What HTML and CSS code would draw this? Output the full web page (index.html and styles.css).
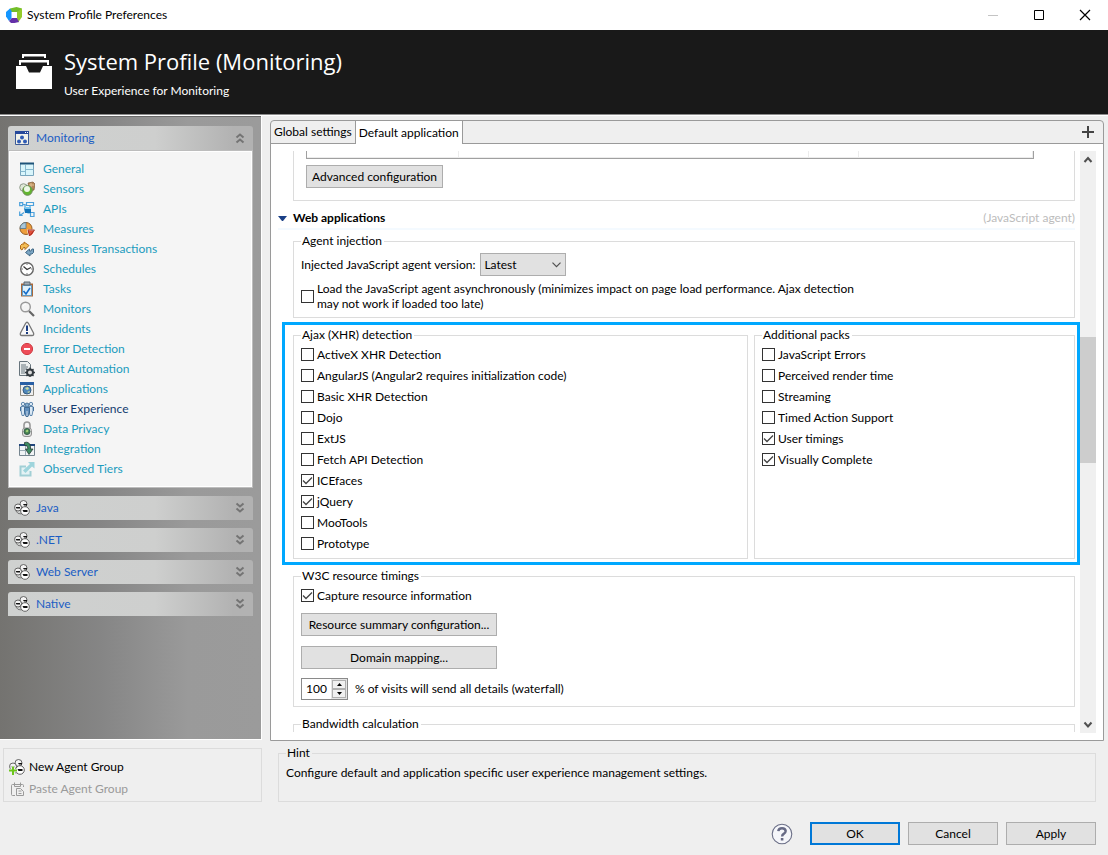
FILE: index.html
```html
<!DOCTYPE html>
<html lang="en">
<head>
<meta charset="utf-8">
<title>System Profile Preferences</title>
<link rel="stylesheet" href="styles.css">
</head>
<body>
<svg class="defs" aria-hidden="true">
  <symbol id="agents" viewBox="0 0 16 16">
    <g stroke="#555" stroke-width=".9"><circle cx="9.500" cy="4" r="3.500" fill="#f4f4f4"/><circle cx="4" cy="7.500" r="3.500" fill="#f4f4f4"/><circle cx="11" cy="11" r="4.300" fill="#fff"/></g>
    <path d="M9 4h4v1.500h-3zM1.500 7H6v1.500H2.500zM8.500 10h5v2H9.500z" fill="#111"/>
    <path d="M1.500 10.500q2 4 6 3.500" stroke="#777" fill="none"/>
  </symbol>
  <symbol id="down" viewBox="0 0 10 12"><path d="M1.500 1.500 5 4.500l3.500-3M1.500 6.500 5 9.500l3.500-3" fill="none" stroke="#747474" stroke-width="2"/></symbol>
</svg>

<header class="titlebar">
  <svg class="logo" viewBox="0 0 16 16" aria-hidden="true"><path d="M4 1.500 10.500 0 16 1.500 14.500 5H3z" fill="#73be28"/><path d="M16 1.500V10l-4 5.500-1-4.500V5z" fill="#94cc2a"/><path d="M4 1.500 6 5v6l-3 3L0 9.500V5z" fill="#1496ff"/><path d="M3 14l3-3h5l2 4-4.500 1H5z" fill="#6430a8"/><path d="M5.500 5H11v6H5.500z" fill="#fff"/></svg>
  <span class="titlebar-text">System Profile Preferences</span>
  <button class="win" aria-label="Minimize"><svg viewBox="0 0 12 12"><path d="M1 6.500h10" stroke="#c4c4c4"/></svg></button>
  <button class="win" aria-label="Maximize"><svg viewBox="0 0 12 12"><path d="M1.500 1.500h9v9h-9z" fill="none" stroke="#000"/></svg></button>
  <button class="win" aria-label="Close"><svg viewBox="0 0 12 12"><path d="m1 1 10 10M11 1 1 11" stroke="#000" stroke-width="1.200"/></svg></button>
</header>

<section class="banner">
  <svg class="banner-icon" viewBox="0 0 36 36" aria-hidden="true"><path d="M6 4V0h24v4h-2V2.500H8V4zM3 11V6h30v5h-2V8.500H5V11z" fill="#fff"/><path d="M0 12h10l3 6.500h11L27 12h9v23H0z" fill="#fff"/></svg>
  <div>
    <h1>System Profile (Monitoring)</h1>
    <p>User Experience for Monitoring</p>
  </div>
</section>

<main class="main">
  <nav class="sidebar">
    <section>
      <button class="group"><svg class="ico" viewBox="0 0 16 16"><path d="M1.500 2.500h13v12h-13z" fill="#f2f2ea" stroke="#3c5a96"/><path d="M1 1h14v3H1z" fill="#26489a"/><path d="M11 2h1v1h-1zM13 2h1v1h-1z" fill="#fff"/><g fill="#2f5bb5"><circle cx="8" cy="7.500" r="2"/><circle cx="5" cy="11.500" r="2"/><circle cx="11" cy="11.500" r="2"/></g></svg><span>Monitoring</span><svg class="chev up" viewBox="0 0 10 12"><use href="#down"/></svg></button>
      <ul class="links">
        <li><a href="#"><svg class="ico" viewBox="0 0 16 16"><path d="M1.500 2.500h13v12h-13z" fill="#d9f5fb" stroke="#7aa6bd"/><path d="M1 1.500h14v2H1z" fill="#1d5379"/><path d="M6.500 4v10M1.500 10.500h5M6.500 8.500h8" stroke="#86b9cf"/></svg>General</a></li>
        <li><a href="#"><svg class="ico" viewBox="0 0 16 16"><path d="M9 2l5-1 2 2-1 6-4 1z" fill="#b48758" stroke="#7d5a35" stroke-width=".7"/><path d="M12 2v7M10 4h5" stroke="#e0bf90"/><circle cx="4.500" cy="6.500" r="3.800" fill="#dfe8d8" stroke="#8f9a8b"/><circle cx="8.500" cy="9.500" r="4.800" fill="#62b62f" stroke="#6d8a5b"/><circle cx="8" cy="8" r="3" fill="#edf8e8"/></svg>Sensors</a></li>
        <li><a href="#"><svg class="ico" viewBox="0 0 16 16"><g fill="none" stroke="#4ba1dc" stroke-width="1.200"><path d="M.7 1.700h3v3h-3zM7.500 1.500h7v3h-7zM1 14.500l4-3M11.500 11.500h3.500v4h-3.500zM4 3.500h2v4M11 4.500v3M9 10v2h3M.7 10.500v4h3"/></g><path d="M5 7h6l1 1v4H6z" fill="#1374ba"/><path d="M5 7l1-1h6v2H6z" fill="#79c7f0"/></svg>APIs</a></li>
        <li><a href="#"><svg class="ico" viewBox="0 0 16 16"><circle cx="7" cy="7.500" r="6" fill="#ee9e3c" stroke="#925d27"/><path d="M7 7.500V1.500a6 6 0 0 0-6 6z" fill="#a9c7d9" stroke="#52758b" stroke-width=".8"/><path d="M8.500 9h7a7 7 0 0 1-5.500 6.500z" fill="#e34d38" stroke="#fff"/><path d="M9 9h6.500l-5 6z" fill="none" stroke="#a33324"/></svg>Measures</a></li>
        <li><a href="#"><svg class="ico" viewBox="0 0 16 16"><path d="M1.500 8V4.500L3 3h2V1l5 3.500-4 4V6.500H4.500L3 9z" fill="#f3bd55" stroke="#b06b18"/><path d="M14.500 8v3.500L13 13h-2v2l-4.500-3.500 4-3.500v2H12l1-2z" fill="#7ba5c3" stroke="#416986"/></svg>Business Transactions</a></li>
        <li><a href="#"><svg class="ico" viewBox="0 0 16 16"><circle cx="8" cy="8" r="6.300" fill="#fff" stroke="#666" stroke-width="1.400"/><path d="M4.500 5.500 8 8.500l4-2" fill="none" stroke="#333" stroke-width="1.200"/><path d="M8 2.500V4M8 12v1.500M2.500 8H4M12 8h1.500" stroke="#777"/></svg>Schedules</a></li>
        <li><a href="#"><svg class="ico" viewBox="0 0 16 16"><path d="M2 2.500h12v13H2z" fill="#a8683a"/><path d="M3.500 4.500h9v10h-9z" fill="#dff1fb" stroke="#629ac2"/><path d="M5 1h6v3H5z" fill="#a3adb5" stroke="#59656e"/><path d="m4.500 10 2.500 3 4-6" fill="none" stroke="#126bc8" stroke-width="1.600"/></svg>Tasks</a></li>
        <li><a href="#"><svg class="ico" viewBox="0 0 16 16"><path d="m10 10 5 5" stroke="#666" stroke-width="2.200"/><circle cx="6.500" cy="6" r="4.800" fill="#f4f4f4" stroke="#999" stroke-width="1.400"/><path d="M4 5q1-2 3-2" stroke="#fff" fill="none"/></svg>Monitors</a></li>
        <li><a href="#"><svg class="ico" viewBox="0 0 16 16"><path d="M6.500 2.500Q8 0 9.500 2.500L14.500 12q.8 2.500-1.500 2.500H3Q.7 14.500 1.500 12z" fill="#f8f8f8" stroke="#777" stroke-width="1.300"/><path d="M7 4.500h2V10H7zM7 11h2v2H7z" fill="#1b3c80"/></svg>Incidents</a></li>
        <li><a href="#"><svg class="ico" viewBox="0 0 16 16"><circle cx="8" cy="8" r="5.600" fill="#ee4c58" stroke="#cf3c42"/><path d="M5 7h6v2H5z" fill="#fff"/></svg>Error Detection</a></li>
        <li><a href="#"><svg class="ico" viewBox="0 0 16 16"><path d="M.5.500h8l3 3v11H.5z" fill="#ecefef" stroke="#67747c"/><path d="M2 4h5M2 6h7M2 8h6M2 10h4M2 12h4" stroke="#67747c"/><circle cx="11" cy="11.500" r="3" fill="#ddd" stroke="#343b40" stroke-width="2"/><path d="M11 6.500v2M11 14.500v1.500M6 11.500h2M14 11.500h2M7.500 8l1.500 1.500M13 13.500l1.500 1.500M14.500 8 13 9.500M7.500 15 9 13.500" stroke="#343b40" stroke-width="1.300"/></svg>Test Automation</a></li>
        <li><a href="#"><svg class="ico" viewBox="0 0 16 16"><path d="M1.500 1.500h13v13h-13z" fill="#eee" stroke="#8d8b82"/><path d="M1 1h14v3H1z" fill="#285fa5"/><circle cx="8" cy="9" r="4" fill="#4e87bb" stroke="#345c82"/><path d="M6 7l3-1 1 2-2 1zM8 11l3-1-1 2z" fill="#d0dd9c"/></svg>Applications</a></li>
        <li><a href="#" class="current"><svg class="ico" viewBox="0 0 16 16"><g fill="#dbe9f5" stroke="#44729e" stroke-width=".8"><circle cx="4" cy="3" r="1.700"/><path d="M2 5.500h4v4l-1 5H3l-1-5z"/><circle cx="12" cy="3" r="1.700"/><path d="M10 5.500h4v4l-1 5h-2l-1-5z"/></g><circle cx="8" cy="4" r="2" fill="#83aed1" stroke="#24527e" stroke-width=".7"/><path d="M5.500 6.500h5v5L9 15.500H7l-1.500-4z" fill="#5e8dbb" stroke="#24527e" stroke-width=".7"/><path d="M8 10v5" stroke="#fff" stroke-width=".7"/><path d="M1.500 6v4M14.500 6v4" stroke="#44729e"/></svg>User Experience</a></li>
        <li><a href="#"><svg class="ico" viewBox="0 0 16 16"><path d="M5 8V4q0-3 3-3t3 3v4" fill="none" stroke="#999" stroke-width="1.600"/><rect x="3.500" y="7" width="9" height="8.500" rx="2.500" fill="#dedede" stroke="#929292"/><circle cx="8" cy="10.500" r="3" fill="#488552" stroke="#345c4a"/><path d="m6.500 10 2-1.500 1 1.500-1.500 1.500z" fill="#a9d77c"/></svg>Data Privacy</a></li>
        <li><a href="#"><svg class="ico" viewBox="0 0 16 16"><path d="M.5 3.500h15v11H.5z" fill="#f0f3f5" stroke="#75858f"/><path d="M0 3h16v2H0z" fill="#20457b"/><path d="M1 9.500h5M6.500 5v9" stroke="#9bacb5"/><path d="M5.500 1.500q5-1.500 6 4V8h2.500L10 13.500 6.500 8H9q0-4-3.500-4z" fill="#3d8b61" stroke="#293d36" stroke-width=".8"/></svg>Integration</a></li>
        <li><a href="#"><svg class="ico" viewBox="0 0 16 16"><path d="M7 5.500H1.500v9h10V10" fill="#e4f2f4" stroke="#a2cfd5" stroke-width="2"/><path d="M9 1h6.500v6.500L13 5.500 6.500 12 4 9.500 11 3z" fill="#9ed4dc"/></svg>Observed Tiers</a></li>
      </ul>
    </section>
    <button class="group"><svg class="ico"><use href="#agents"/></svg><span>Java</span><svg class="chev"><use href="#down"/></svg></button>
    <button class="group"><svg class="ico"><use href="#agents"/></svg><span>.NET</span><svg class="chev"><use href="#down"/></svg></button>
    <button class="group"><svg class="ico"><use href="#agents"/></svg><span>Web Server</span><svg class="chev"><use href="#down"/></svg></button>
    <button class="group"><svg class="ico"><use href="#agents"/></svg><span>Native</span><svg class="chev"><use href="#down"/></svg></button>
  </nav>

  <section class="panel">
    <div class="tabs" role="tablist">
      <button class="tab" role="tab">Global settings</button>
      <button class="tab active" role="tab" aria-selected="true">Default application</button>
      <button class="add" aria-label="Add application"><svg viewBox="0 0 12 12"><path d="M6 0v12M0 6h12" stroke="#444" stroke-width="2"/></svg></button>
    </div>
    <div class="view">
      <div class="content">
        <div class="box cut-top">
          <div class="grid-end"><i></i><i></i><i></i><i></i></div>
          <button class="btn">Advanced configuration</button>
        </div>
        <div class="section-head">
          <svg viewBox="0 0 9 5" aria-hidden="true"><path d="M0 0h9L5 5H4z" fill="#1a3f86"/></svg>
          <h2>Web applications</h2>
          <span>(JavaScript agent)</span>
        </div>
        <fieldset class="box injection">
          <legend>Agent injection</legend>
          <div class="row">
            <label for="version">Injected JavaScript agent version:</label>
            <select id="version"><option>Latest</option></select>
          </div>
          <label class="check long"><input type="checkbox"><span>Load the JavaScript agent asynchronously (minimizes impact on page load performance. Ajax detection<br>may not work if loaded too late)</span></label>
        </fieldset>
        <div class="highlight">
          <fieldset class="box list">
            <legend>Ajax (XHR) detection</legend>
            <label class="check"><input type="checkbox">ActiveX XHR Detection</label>
            <label class="check"><input type="checkbox">AngularJS (Angular2 requires initialization code)</label>
            <label class="check"><input type="checkbox">Basic XHR Detection</label>
            <label class="check"><input type="checkbox">Dojo</label>
            <label class="check"><input type="checkbox">ExtJS</label>
            <label class="check"><input type="checkbox">Fetch API Detection</label>
            <label class="check"><input type="checkbox" checked>ICEfaces</label>
            <label class="check"><input type="checkbox" checked>jQuery</label>
            <label class="check"><input type="checkbox">MooTools</label>
            <label class="check"><input type="checkbox">Prototype</label>
          </fieldset>
          <fieldset class="box list">
            <legend>Additional packs</legend>
            <label class="check"><input type="checkbox">JavaScript Errors</label>
            <label class="check"><input type="checkbox">Perceived render time</label>
            <label class="check"><input type="checkbox">Streaming</label>
            <label class="check"><input type="checkbox">Timed Action Support</label>
            <label class="check"><input type="checkbox" checked>User timings</label>
            <label class="check"><input type="checkbox" checked>Visually Complete</label>
          </fieldset>
        </div>
        <fieldset class="box timings">
          <legend>W3C resource timings</legend>
          <label class="check"><input type="checkbox" checked>Capture resource information</label>
          <div class="stack">
            <button class="btn">Resource summary configuration...</button>
            <button class="btn">Domain mapping...</button>
          </div>
          <div class="row visits">
            <div class="spinner">
              <input id="visits" type="text" value="100">
              <div class="steps">
                <button aria-label="Increase"><svg viewBox="0 0 5 3"><path d="M0 3h5L2.500 0z"/></svg></button>
                <button aria-label="Decrease"><svg viewBox="0 0 5 3"><path d="M0 0h5L2.500 3z"/></svg></button>
              </div>
            </div>
            <label for="visits">% of visits will send all details (waterfall)</label>
          </div>
        </fieldset>
        <fieldset class="box cut-bottom">
          <legend>Bandwidth calculation</legend>
        </fieldset>
      </div>
      <div class="scrollbar" aria-hidden="true">
        <svg viewBox="0 0 16 17"><path d="m4.500 11 3.500-4 3.500 4" fill="none" stroke="#505050" stroke-width="2"/></svg>
        <div class="before"></div>
        <div class="thumb"></div>
        <div class="after"></div>
        <svg viewBox="0 0 16 17"><path d="m4.500 6.500 3.500 4 3.500-4" fill="none" stroke="#505050" stroke-width="2"/></svg>
      </div>
    </div>
  </section>
</main>

<footer>
  <div class="info">
    <div class="actions">
      <button><svg class="ico" viewBox="0 0 16 16"><use href="#agents" width="16" height="16"/><path d="M4 7v9M0 11.500h8" stroke="#efefef" stroke-width="3.600"/><path d="M4 7.500V16M0 11.500h8" stroke="#6cc51c" stroke-width="2"/></svg>New Agent Group</button>
      <button disabled><svg class="ico" viewBox="0 0 16 16"><g fill="none" stroke="#9a9a9a"><path d="M6 14.500H3.500q-1 0-1-1v-9q0-1 1-1h10q1 0 1 1V6M5.500 1.500v4h6v-4"/><path d="M7.500 7.500h4l3 3v4h-7zM9.500 10h3M9.500 12.500h3"/></g></svg>Paste Agent Group</button>
    </div>
    <fieldset class="box hint">
      <legend>Hint</legend>
      <p>Configure default and application specific user experience management settings.</p>
    </fieldset>
  </div>
  <div class="buttons">
    <button class="help" aria-label="Help"><svg viewBox="0 0 22 22"><circle cx="11" cy="11" r="9.800" fill="#f5f6fa" stroke="#6a6e86" stroke-width="1.100"/><path d="M7.300 8.200q.3-3 3.700-3t3.700 2.800q0 1.700-2 2.900-1.600 1-1.600 2.600" fill="none" stroke="#666a85" stroke-width="2.400"/><path d="M9.800 15h2.600v2.500H9.800z" fill="#666a85"/></svg></button>
    <button class="btn primary">OK</button>
    <button class="btn">Cancel</button>
    <button class="btn">Apply</button>
  </div>
</footer>
</body>
</html>
```
FILE: styles.css
```css
* { box-sizing: border-box; }
body {
  margin: 0;
  min-height: 100vh;
  display: flex;
  flex-direction: column;
  background: #efefef;
  color: #000;
  font: 12px/16px Lato, "Open Sans", sans-serif;
}
button, input, select { font: inherit; color: inherit; margin: 0; }
button { padding: 0; border: 0; background: none; white-space: nowrap; }
h1, h2, p, ul { margin: 0; padding: 0; font-weight: 400; }
svg { display: block; flex: none; }
.defs { display: none; }
.ico { width: 16px; height: 16px; }

.titlebar { display: flex; align-items: center; height: 30px; padding-left: 6px; background: #fff; }
.logo { width: 16px; height: 16px; margin-right: 5px; }
.titlebar-text { flex: 1; }
.win { display: flex; justify-content: center; width: 46px; }
.win svg { width: 12px; height: 12px; }

.banner {
  display: flex;
  align-items: flex-start;
  gap: 12px;
  height: 86px;
  padding: 16px;
  background: #191919;
  border-bottom: 1px solid #fff;
  box-shadow: inset 0 -1px #8c8c8c;
  color: #fff;
}
.banner-icon { width: 36px; height: 36px; margin-top: 8px; }
.banner h1 { font: 22px/30px "Open Sans", sans-serif; }
.banner p { margin-top: 7px; }

.main { flex: 1; display: grid; grid-template-columns: 262px 1fr; }
.sidebar {
  display: flex;
  flex-direction: column;
  gap: 8px;
  margin-bottom: 5px;
  padding: 10px 8px;
  background: linear-gradient(90deg, #747370, #868686 40%, #9a9a9a 72%, #9b9b9b);
  border: solid #fff;
  border-width: 0 1px 1px 0;
  box-shadow: inset 0 1px #6a6a6a;
}
.group {
  display: flex;
  align-items: center;
  gap: 6px;
  width: 100%;
  height: 24px;
  padding: 0 8px 0 6px;
  border-radius: 3px 3px 0 0;
  background: linear-gradient(90deg, #cfd1d0, #cecfce 60%, #b2b2b2 92%);
  color: #1b5dc4;
  text-align: left;
}
.group span { flex: 1; }
.chev { width: 10px; height: 12px; }
.chev.up { transform: rotate(180deg); }
.links {
  list-style: none;
  padding: 8px 10px;
  border: 1px solid #bdbdbd;
  background: #f5f5f5;
  box-shadow: inset 0 0 0 1px #fff;
}
.links a {
  display: flex;
  align-items: center;
  gap: 8px;
  height: 20px;
  color: #1b9cbe;
  text-decoration: none;
}
.links a.current { color: #123c70; }

.panel {
  display: flex;
  flex-direction: column;
  margin: 4px 4px 4px 8px;
  border: 1px solid #9a9a9a;
  border-radius: 4px 4px 0 0;
}
.tabs { display: flex; height: 23px; border-bottom: 1px solid #9a9a9a; }
.tab { padding: 0 3px; }
.tab.active {
  height: 23px;
  background: #fff;
  border: solid #9a9a9a;
  border-width: 0 1px;
}
.add { margin-left: auto; padding: 0 9px; }
.add svg { width: 12px; height: 12px; }

.view { flex: 1; display: flex; padding: 7px; background: #fff; }
.content { flex: 1; min-width: 0; }
.box {
  min-width: 0;
  margin: 0 5px 0 15px;
  padding: 0 7px;
  border: 1px solid #dcdcdc;
}
legend { padding: 0 2px 0 1px; }
.cut-top { padding: 0 12px 12px; border-top: 0; }
.grid-end {
  display: grid;
  grid-template-columns: 152px 1fr 50px 174px;
  height: 8px;
  margin: 0 28px 6px 0;
  border: solid #a0a0a0;
  border-width: 0 1px 1px;
}
.grid-end i { border: solid #ececec; border-width: 0 1px 1px 0; }
.btn {
  height: 23px;
  padding: 0 5px;
  border: 1px solid #adadad;
  background: #e1e1e1;
}
.section-head {
  display: flex;
  align-items: center;
  gap: 6px;
  margin: 0 5px 3px 0;
  padding: 9px 0 2px;
  border-bottom: 2px solid #f4faff;
}
.section-head svg { width: 9px; height: 5px; }
.section-head h2 { flex: 1; font-size: 12px; font-weight: 700; }
.section-head span { color: #bcbcbc; }

.row { display: flex; align-items: center; gap: 5px; }
.injection { padding-top: 4px; padding-bottom: 6px; }
select {
  appearance: none;
  width: 86px;
  height: 23px;
  padding: 0 3px;
  border: 1px solid #adadad;
  border-radius: 0;
  background: #e1e1e1 url("data:image/svg+xml,%3Csvg xmlns='http://www.w3.org/2000/svg' viewBox='0 0 9 6'%3E%3Cpath d='m.5 .7 4 4 4-4' fill='none' stroke='%23505050' stroke-width='1.200'/%3E%3C/svg%3E") right 4px center / 9px 6px no-repeat;
}
.check { display: flex; align-items: center; gap: 3px; height: 21px; }
.check.long { height: 30px; margin-top: 5px; line-height: 15px; }
.check input {
  appearance: none;
  flex: none;
  width: 13px;
  height: 13px;
  border: 1px solid #333;
  background: #fff;
}
.check input:checked {
  background: url("data:image/svg+xml,%3Csvg xmlns='http://www.w3.org/2000/svg' viewBox='0 0 11 11'%3E%3Cpath d='m1 5.500 3 3 6-6' fill='none' stroke='%23444' stroke-width='1.300'/%3E%3C/svg%3E") center / 11px 11px no-repeat;
}

.highlight {
  display: grid;
  grid-template-columns: 455fr 321fr;
  gap: 6px;
  margin: 4px 0 3px 4px;
  padding: 2px 2px 3px 8px;
  border: 3px solid #00a8ff;
}
.list { margin: 0; padding-top: 1px; padding-bottom: 4px; }
.timings { padding-top: 1px; padding-bottom: 6px; }
.stack { display: grid; gap: 10px; width: 196px; margin: 7px 0 9px; }
.spinner {
  display: flex;
  width: 47px;
  height: 22px;
  border: 1px solid #8a8a8a;
  background: #fff;
}
.spinner input { width: 29px; padding: 0; border: 0; text-align: center; background: none; }
.steps { display: grid; flex: 1; gap: 0; padding: 1px; background: #e4e4e4; }
.steps button { display: grid; place-items: center; border: 1px solid #b0b0b0; background: #f0f0f0; }
.steps svg { width: 5px; height: 3px; }
.visits { gap: 7px; }
.cut-bottom { margin-top: 9px; border-bottom: 0; }

.scrollbar { display: flex; flex-direction: column; width: 16px; background: #f0f0f0; }
.scrollbar svg { width: 16px; height: 17px; }
.before { flex: 169; }
.thumb { flex: 126; background: #cdcdcd; }
.after { flex: 253; }

.info { display: grid; grid-template-columns: 262px 1fr; }
.actions {
  margin: 3px 0 0 3px;
  padding: 7px 5px 0;
  border: 1px solid #dcdcdc;
}
.actions button { display: flex; align-items: center; gap: 4px; height: 22px; }
.actions button:disabled { color: #9a9a9a; }
.hint { margin: 0 12px 0 16px; padding: 4px 7px 20px; }
.buttons { display: flex; gap: 8px; padding: 20px 12px 10px; justify-content: flex-end; }
.buttons .btn { width: 90px; }
.buttons .primary { border: 2px solid #0078d7; }
.help { margin-right: 9px; }
.help svg { width: 22px; height: 22px; }
```
